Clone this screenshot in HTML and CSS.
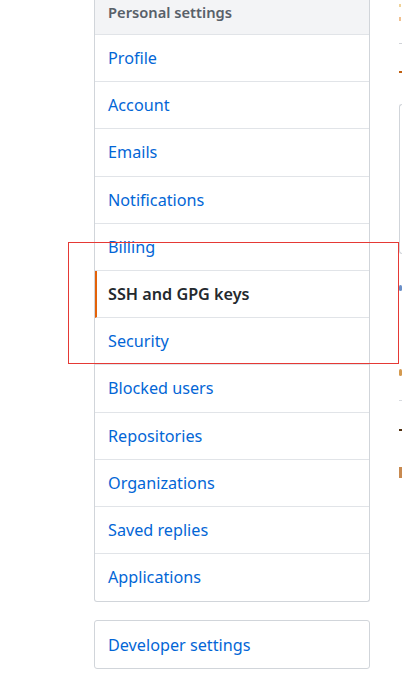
FILE: index.html
```html
<!DOCTYPE html>
<html>
<head>
<meta charset="utf-8">
<link rel="stylesheet" href="styles.css">
</head>
<body>
<div class="page">
  <div class="sidebar">
    <nav class="menu">
      <div class="menu-heading">Personal settings</div>
      <a class="menu-item" href="#">Profile</a>
      <a class="menu-item" href="#">Account</a>
      <a class="menu-item" href="#">Emails</a>
      <a class="menu-item" href="#">Notifications</a>
      <a class="menu-item" href="#">Billing</a>
      <a class="menu-item selected" href="#">SSH and GPG keys</a>
      <a class="menu-item" href="#">Security</a>
      <a class="menu-item" href="#">Blocked users</a>
      <a class="menu-item" href="#">Repositories</a>
      <a class="menu-item" href="#">Organizations</a>
      <a class="menu-item" href="#">Saved replies</a>
      <a class="menu-item last" href="#">Applications</a>
    </nav>
    <nav class="menu dev">
      <a class="menu-item last" href="#">Developer settings</a>
    </nav>
  </div>
  <div class="main">
    <span class="mark m1"></span>
    <span class="mark m2"></span>
    <span class="mark m3"></span>
    <span class="mark m4"></span>
    <div class="box-edge"></div>
    <span class="mark m5"></span>
    <span class="mark m6"></span>
    <span class="mark m7"></span>
    <span class="mark m8"></span>
    <span class="mark m9"></span>
  </div>
</div>
<div class="annotation"></div>
</body>
</html>
```
FILE: styles.css
```css
html, body {
  margin: 0;
  padding: 0;
  background: #fff;
}
body {
  font-family: "Noto Sans", "Open Sans", "Liberation Sans", sans-serif;
  width: 402px;
  height: 679px;
  overflow: hidden;
  position: relative;
}
.page {
  display: flex;
  padding-left: 94px;
  gap: 29px;
}
.sidebar {
  width: 276px;
  flex: none;
}
.menu {
  border: 1px solid #d1d5da;
  border-top: none;
  border-radius: 0 0 3px 3px;
  display: flex;
  flex-direction: column;
}
.menu-heading {
  height: 35px;
  box-sizing: border-box;
  background: #f3f4f6;
  border-bottom: 1px solid #e1e4e8;
  padding: 0 13px;
  font-size: 14.7px;
  font-weight: 600;
  color: #586069;
  line-height: 24px;
}
.menu-item {
  display: block;
  height: 47.2px;
  box-sizing: border-box;
  border-bottom: 1px solid #e1e4e8;
  padding: 0 13px;
  line-height: 47px;
  font-size: 16.2px;
  color: #0366d6;
  text-decoration: none;
}
.menu-item.last {
  border-bottom: none;
}
.menu-item.selected {
  border-left: 2px solid #e36209;
  padding-left: 11px;
  color: #24292e;
  font-weight: 600;
}
.menu.dev {
  margin-top: 18px;
  border-top: 1px solid #d1d5da;
  border-radius: 3px;
}
.menu.dev .menu-item {
  height: 47px;
  line-height: 49px;
}
.main {
  flex: 1;
  overflow: hidden;
  display: flex;
  flex-direction: column;
  align-items: flex-start;
}
.mark {
  display: block;
  width: 2px;
  height: 3px;
}
.m1 { margin-top: 4px; background: #f0d39a; }
.m2 { margin-top: 10px; background: #f0c090; height: 4px; }
.m3 { margin-top: 22px; background: #d0d3d8; height: 1px; width: 3px; }
.m4 { margin-top: 27px; background: #c06010; height: 2px; width: 3px; }
.box-edge {
  margin-top: 31px;
  width: 3px;
  height: 150px;
  border-left: 1px solid #d1d5da;
  border-top: 1px solid #d1d5da;
  border-bottom: 1px solid #d1d5da;
  border-radius: 3px 0 0 3px;
  box-sizing: border-box;
}
.m5 { margin-top: 31px; background: #6a8fc8; height: 6px; width: 3px; border-radius: 2px; }
.m6 { margin-top: 78px; background: #d49a50; height: 7px; width: 3px; border-radius: 2px; }
.m7 { margin-top: 24px; background: #d8dbe0; height: 1px; width: 3px; }
.m8 { margin-top: 28px; background: #503010; height: 2px; width: 3px; }
.m9 { margin-top: 36px; background: #c88a50; height: 11px; width: 3px; }
.annotation {
  position: absolute;
  left: 68px;
  top: 242px;
  width: 331px;
  height: 122px;
  box-sizing: border-box;
  border: 1px solid #e53935;
}
```
